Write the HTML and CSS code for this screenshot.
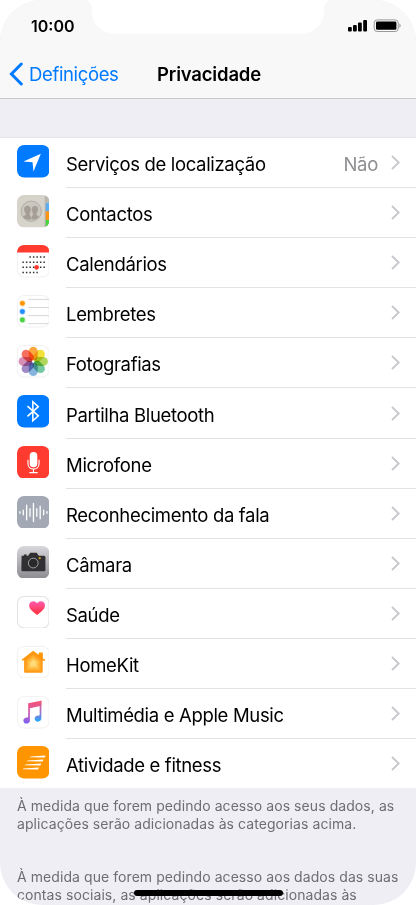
FILE: index.html
```
<!DOCTYPE html>
<html lang="pt">
<head>
  <meta charset="UTF-8">
  <title>Privacidade</title>
  <link rel="stylesheet" href="styles.css">
</head>
<body>

<div class="phone">
  <svg class="notch" width="250" height="34" viewBox="0 0 250 34"><path d="M0 0C6 0 9 3 9 10C9 25 18 33.5 33 33.5H216C232 33.5 241 25 241 10C241 3 244 0 250 0Z" fill="#fff"/></svg>

  <header>
    <div class="status">
      <span class="time">10:00</span>
      <svg width="54" height="16" viewBox="0 0 54 16">
        <rect x="0" y="9" width="3.8" height="4.5" rx="1"/>
        <rect x="5" y="7" width="3.8" height="6.5" rx="1"/>
        <rect x="10" y="4.5" width="3.8" height="9" rx="1"/>
        <rect x="15.2" y="2" width="3.8" height="11.5" rx="1"/>
        <rect x="26.2" y="1.9" width="24" height="11.6" rx="3" fill="none" stroke="#999"/>
        <rect x="28" y="3.6" width="20.4" height="8.2" rx="1.4"/>
        <path d="M51.4 5.5Q54 7.7 51.4 9.9Z" fill="#999"/>
      </svg>
    </div>
    <nav>
      <a class="back"><svg width="14" height="24" viewBox="0 0 14 24"><path d="M12.3 2L2.4 12L12.3 22" fill="none" stroke="#007aff" stroke-width="3" stroke-linecap="round"/></svg><span>Definições</span></a>
      <h1>Privacidade</h1>
    </nav>
  </header>

  <ul class="list">
    <li>
      <svg class="icon" viewBox="0 0 32 32"><rect width="32" height="32" rx="7" fill="#007aff"/><path d="M23.5 8.5L6.3 16.3L15.3 17L16.2 26Z" fill="#fff"/></svg>
      <div class="row"><span class="label">Serviços de localização</span><span class="value">Não</span><svg class="chevron" viewBox="0 0 9 15"><path d="M1 1L7.7 7.5L1 14"/></svg></div>
    </li>
    <li>
      <svg class="icon" viewBox="0 0 32 32">
        <defs><clipPath id="round"><rect width="32" height="32" rx="7"/></clipPath></defs>
        <g clip-path="url(#round)">
          <rect width="32" height="32" fill="#d5d3ca"/>
          <rect x="28" width="4" height="8" fill="#bbb8b0"/>
          <rect x="28" y="8" width="4" height="8" fill="#5cadf2"/>
          <rect x="28" y="16" width="4" height="8.5" fill="#ff9310"/>
          <rect x="28" y="24.5" width="4" height="8" fill="#4cd143"/>
          <path d="M27.8 0V32" stroke="#aaa79f" stroke-width=".7"/>
        </g>
        <circle cx="14" cy="16" r="10" fill="#cbc8c0" stroke="#aaa59f" stroke-width=".8"/>
        <path d="M6 21.5C7 20 9 20 8.8 18.5C6 15 6.5 10.5 10.3 10.5C14 10.5 14.4 15 12.4 18.5C12.2 20.2 14 20 14.2 23.8C11 25.3 7.5 23.8 6 21.5Z" fill="#a49e97"/>
        <path d="M22 21.5C21 20 19 20 19.2 18.5C22 15 21.5 10.5 17.7 10.5C14 10.5 13.6 15 15.6 18.5C15.8 20.2 14 20 13.8 23.8C17 25.3 20.5 23.8 22 21.5Z" fill="#a49e97" stroke="#cbc8c0" stroke-width=".4"/>
      </svg>
      <div class="row"><span class="label">Contactos</span><svg class="chevron" viewBox="0 0 9 15"><path d="M1 1L7.7 7.5L1 14"/></svg></div>
    </li>
    <li>
      <svg class="icon" viewBox="0 0 32 32">
        <rect class="tile" x=".5" y=".5" width="31" height="31" rx="6.5"/>
        <path d="M0 7.3V7A7 7 0 0 1 7 0H25A7 7 0 0 1 32 7V7.3Z" fill="#ff3b30"/>
        <g fill="none" stroke="#333" stroke-width="1.5" stroke-dasharray="1.5 1.95">
          <path d="M12.2 11.8H27.5M5.3 17H27.5M5.3 22H27.5M5.3 27H20.5"/>
        </g>
        <circle cx="19.3" cy="22" r="2.3" fill="#ff3b30"/>
      </svg>
      <div class="row"><span class="label">Calendários</span><svg class="chevron" viewBox="0 0 9 15"><path d="M1 1L7.7 7.5L1 14"/></svg></div>
    </li>
    <li>
      <svg class="icon" viewBox="0 0 32 32">
        <rect class="tile" x=".5" y=".5" width="31" height="31" rx="6.5"/>
        <path d="M11 4.3H32M11 12.3H32M11 20.3H32M11 28.2H31" stroke="#d4d4d8" stroke-width=".9"/>
        <g stroke-opacity=".4" stroke-width="1.5">
          <circle cx="5.3" cy="8.2" r="2.3" fill="#ff9500" stroke="#ff9500"/>
          <circle cx="5.3" cy="16.3" r="2.3" fill="#1f8cff" stroke="#1f8cff"/>
          <circle cx="5.3" cy="24.5" r="2.3" fill="#4cd143" stroke="#4cd143"/>
        </g>
      </svg>
      <div class="row"><span class="label">Lembretes</span><svg class="chevron" viewBox="0 0 9 15"><path d="M1 1L7.7 7.5L1 14"/></svg></div>
    </li>
    <li>
      <svg class="icon" viewBox="0 0 32 32">
        <rect class="tile" x=".5" y=".5" width="31" height="31" rx="6.5"/>
        <g class="petals">
          <rect x="11.6" y="1.8" width="8.8" height="13.4" rx="4.4" fill="#fb9a1c"/>
          <rect x="11.6" y="1.8" width="8.8" height="13.4" rx="4.4" fill="#f0dc16" transform="rotate(45 16 16.2)"/>
          <rect x="11.6" y="1.8" width="8.8" height="13.4" rx="4.4" fill="#a2cf3e" transform="rotate(90 16 16.2)"/>
          <rect x="11.6" y="1.8" width="8.8" height="13.4" rx="4.4" fill="#5dbd90" transform="rotate(135 16 16.2)"/>
          <rect x="11.6" y="1.8" width="8.8" height="13.4" rx="4.4" fill="#6fa8d8" transform="rotate(180 16 16.2)"/>
          <rect x="11.6" y="1.8" width="8.8" height="13.4" rx="4.4" fill="#8e76bc" transform="rotate(225 16 16.2)"/>
          <rect x="11.6" y="1.8" width="8.8" height="13.4" rx="4.4" fill="#d07ba8" transform="rotate(270 16 16.2)"/>
          <rect x="11.6" y="1.8" width="8.8" height="13.4" rx="4.4" fill="#f65543" transform="rotate(315 16 16.2)"/>
        </g>
        <circle cx="16" cy="16.2" r="1" fill="#fff"/>
      </svg>
      <div class="row"><span class="label">Fotografias</span><svg class="chevron" viewBox="0 0 9 15"><path d="M1 1L7.7 7.5L1 14"/></svg></div>
    </li>
    <li>
      <svg class="icon" viewBox="0 0 32 32"><rect width="32" height="32" rx="7" fill="#007aff"/><path d="M10.3 11L21 20.5L15.6 25.3V6.7L21 11.5L10.3 21" fill="none" stroke="#fff" stroke-width="1.5"/></svg>
      <div class="row"><span class="label">Partilha Bluetooth</span><svg class="chevron" viewBox="0 0 9 15"><path d="M1 1L7.7 7.5L1 14"/></svg></div>
    </li>
    <li>
      <svg class="icon" viewBox="0 0 32 32"><rect width="32" height="32" rx="7" fill="#ff3b30"/><rect x="12.5" y="6" width="7.5" height="15" rx="3.75" fill="#fff"/><path d="M10.8 13.5V17.5C10.8 24.5 21.7 24.5 21.7 17.5V13.5M16.2 22.8V26M12.2 26.2H20.4" fill="none" stroke="#fff" stroke-width="1.1"/></svg>
      <div class="row"><span class="label">Microfone</span><svg class="chevron" viewBox="0 0 9 15"><path d="M1 1L7.7 7.5L1 14"/></svg></div>
    </li>
    <li>
      <svg class="icon" viewBox="0 0 32 32"><rect width="32" height="32" rx="7" fill="#a2a9b4"/><path d="M2.9 15.5V17M6.2 14V18.5M9.5 9V23.5M12.8 12.5V20M16.2 7.3V25M19.5 12.5V20M22.8 10V22.5M26.2 14V18.5M29.5 15.5V17" stroke="#fff" stroke-width="1.3" stroke-linecap="round"/></svg>
      <div class="row"><span class="label">Reconhecimento da fala</span><svg class="chevron" viewBox="0 0 9 15"><path d="M1 1L7.7 7.5L1 14"/></svg></div>
    </li>
    <li>
      <svg class="icon" viewBox="0 0 32 32">
        <defs><linearGradient id="silver" x2="0" y2="1"><stop stop-color="#d7d7dc"/><stop offset="1" stop-color="#8c8c91"/></linearGradient></defs>
        <rect width="32" height="32" rx="7" fill="url(#silver)"/>
        <path d="M4.5 9.5H6.8V8.3H9.5V9.5H11L13 6.7H19.3L21.5 9.5H26.5Q28 9.5 28 11V23.3Q28 24.8 26.5 24.8H5.7Q4.3 24.8 4.3 23.3Z" fill="#303033"/>
        <circle cx="16" cy="16.8" r="4.8" fill="#29292c" stroke="#aaa" stroke-width=".9"/>
        <circle cx="22.4" cy="12" r="1.1" fill="#d5a021"/>
      </svg>
      <div class="row"><span class="label">Câmara</span><svg class="chevron" viewBox="0 0 9 15"><path d="M1 1L7.7 7.5L1 14"/></svg></div>
    </li>
    <li>
      <svg class="icon" viewBox="0 0 32 32">
        <defs><linearGradient id="heart" x2="0" y2="1"><stop stop-color="#ff5cb1"/><stop offset="1" stop-color="#ff2b32"/></linearGradient></defs>
        <rect class="tile dark" x=".5" y=".5" width="31" height="31" rx="6.5"/>
        <path d="M19.8 18.8C15.5 15.5 12 13 12 9.2C12 4.8 17.5 3.8 19.8 7.2C22 3.8 27.5 4.8 27.5 9.2C27.5 13 24 15.5 19.8 18.8Z" fill="url(#heart)"/>
      </svg>
      <div class="row"><span class="label">Saúde</span><svg class="chevron" viewBox="0 0 9 15"><path d="M1 1L7.7 7.5L1 14"/></svg></div>
    </li>
    <li>
      <svg class="icon" viewBox="0 0 32 32">
        <rect class="tile" x=".5" y=".5" width="31" height="31" rx="6.5"/>
        <path d="M5 14L16 5.3L22 10V7H24.8V12.2L27.5 14.3" fill="#ff9500" stroke="#ff9500" stroke-width="1.2" stroke-linejoin="round"/>
        <path d="M7 13.5L16 6L25.3 13.5V25.3Q25.3 26.3 24.3 26.3H8Q7 26.3 7 25.3Z" fill="#ff9814"/>
        <path d="M9 14.2L16 8.6L23.3 14.2V24.3H9Z" fill="#ffac2c"/>
        <path d="M11 15L16 11L21.2 15V22.3H11Z" fill="#ffc24c"/>
        <path d="M13.2 15.8L16 13.6L19 15.8V20.3H13.2Z" fill="#ffdc79"/>
      </svg>
      <div class="row"><span class="label">HomeKit</span><svg class="chevron" viewBox="0 0 9 15"><path d="M1 1L7.7 7.5L1 14"/></svg></div>
    </li>
    <li>
      <svg class="icon" viewBox="0 0 32 32">
        <defs>
          <linearGradient id="left" x2="0" y2="1"><stop stop-color="#fb5370"/><stop offset=".6" stop-color="#c35bbd"/><stop offset="1" stop-color="#7861f4"/></linearGradient>
          <linearGradient id="right" x2="0" y2="1"><stop stop-color="#fa5570"/><stop offset=".55" stop-color="#9b72cf"/><stop offset="1" stop-color="#20aafa"/></linearGradient>
        </defs>
        <rect class="tile" x=".5" y=".5" width="31" height="31" rx="6.5"/>
        <path d="M11 7.2L24 4.7V9.5L12.7 12V24C12.7 28 6.3 28.2 6.3 24.3C6.3 21.5 9 21.5 11 21Z" fill="url(#left)"/>
        <path d="M22.3 5L24 4.7V22C24 26 17.4 26.5 17.4 22.5C17.4 19.5 20.2 19.5 22.3 19Z" fill="url(#right)"/>
      </svg>
      <div class="row"><span class="label">Multimédia e Apple Music</span><svg class="chevron" viewBox="0 0 9 15"><path d="M1 1L7.7 7.5L1 14"/></svg></div>
    </li>
    <li>
      <svg class="icon" viewBox="0 0 32 32"><rect width="32" height="32" rx="7" fill="#ff9500"/><path d="M14 10.3L28 9.3L27.5 11.2L12 11ZM10.5 14.2L26 13.2L25.3 15.2L9.5 15ZM8.2 18.2L23.8 17.2L23 19.2L7.5 19ZM6.5 22.2L21.5 21.2L20.7 23.2L5.5 22.8Z" fill="#fff"/></svg>
      <div class="row"><span class="label">Atividade e fitness</span><svg class="chevron" viewBox="0 0 9 15"><path d="M1 1L7.7 7.5L1 14"/></svg></div>
    </li>
  </ul>

  <div class="notes">
    <p>À medida que forem pedindo acesso aos seus dados, as<br>aplicações serão adicionadas às categorias acima.</p>
    <p>À medida que forem pedindo acesso aos dados das suas<br>contas sociais, as aplicações serão adicionadas às</p>
  </div>
  <div class="home-bar"></div>
</div>

</body>
</html>
```

FILE: styles.css
```
* {
  box-sizing: border-box;
}
body {
  margin: 0;
  background: #fff;
  font-family: Inter, sans-serif;
  color: #000;
  overflow: hidden;
}
.phone {
  position: relative;
  width: 416px;
  height: 905px;
  background: #efeef4;
  border-radius: 42px;
  overflow: hidden;
}
.notch {
  position: absolute;
  left: 83px;
  top: 0;
}
header {
  height: 99px;
  background: #f8f8f8;
  border-bottom: 1px solid #cbcbcd;
}
.status {
  display: flex;
  justify-content: space-between;
  height: 49px;
  padding: 18px 14px 0 31px;
}
.time {
  font-size: 16px;
  line-height: 16px;
  font-weight: 600;
}
nav {
  display: grid;
  grid-template-columns: 1fr auto 1fr;
  align-items: center;
  height: 49px;
  padding: 0 7px 0 9px;
}
.back {
  display: flex;
  align-items: center;
  gap: 6px;
  color: #007aff;
  font-size: 18.5px;
  letter-spacing: -0.36px;
}
.back span {
  padding-top: 1px;
}
h1 {
  margin: 0;
  padding-top: 1px;
  font-size: 18.5px;
  font-weight: 600;
  letter-spacing: -0.18px;
}
.list {
  list-style: none;
  margin: 38px 0 0;
  padding: 0;
  background: #fff;
  border-top: 1px solid #e4e4e6;
}
.list li {
  display: flex;
  height: 50.1px;
  padding-left: 16.5px;
}
.list li:last-child {
  height: 49px;
}
.icon {
  width: 32.5px;
  height: 32.5px;
  margin-top: 7px;
  margin-right: 17px;
  flex: none;
}
.tile {
  fill: #fff;
  stroke: #f2f2f2;
}
.tile.dark {
  stroke: #e2e2e2;
}
.petals rect {
  mix-blend-mode: multiply;
  opacity: .85;
}
.row {
  display: flex;
  align-items: center;
  flex: 1;
  border-bottom: 1px solid #e3e3e5;
  padding-right: 16px;
}
.list li:last-child .row {
  border-bottom: none;
}
.label {
  flex: 1;
  padding-top: 3px;
  font-size: 18.5px;
  letter-spacing: -0.33px;
  white-space: nowrap;
}
.value {
  margin-right: 13px;
  padding-top: 3px;
  font-size: 18.5px;
  letter-spacing: -0.3px;
  color: #8e8e93;
}
.chevron {
  width: 9px;
  height: 15px;
  fill: none;
  stroke: #c7c7cc;
  stroke-width: 1.8;
}
.notes {
  padding: 9px 0 0 17px;
  font-size: 14px;
  line-height: 18px;
  letter-spacing: 0.07px;
  color: #6d6d72;
  white-space: nowrap;
}
.notes p {
  margin: 0 0 35px;
}
.home-bar {
  position: absolute;
  left: 134px;
  top: 890px;
  width: 149px;
  height: 6px;
  border-radius: 3px;
  background: #000;
}
```
